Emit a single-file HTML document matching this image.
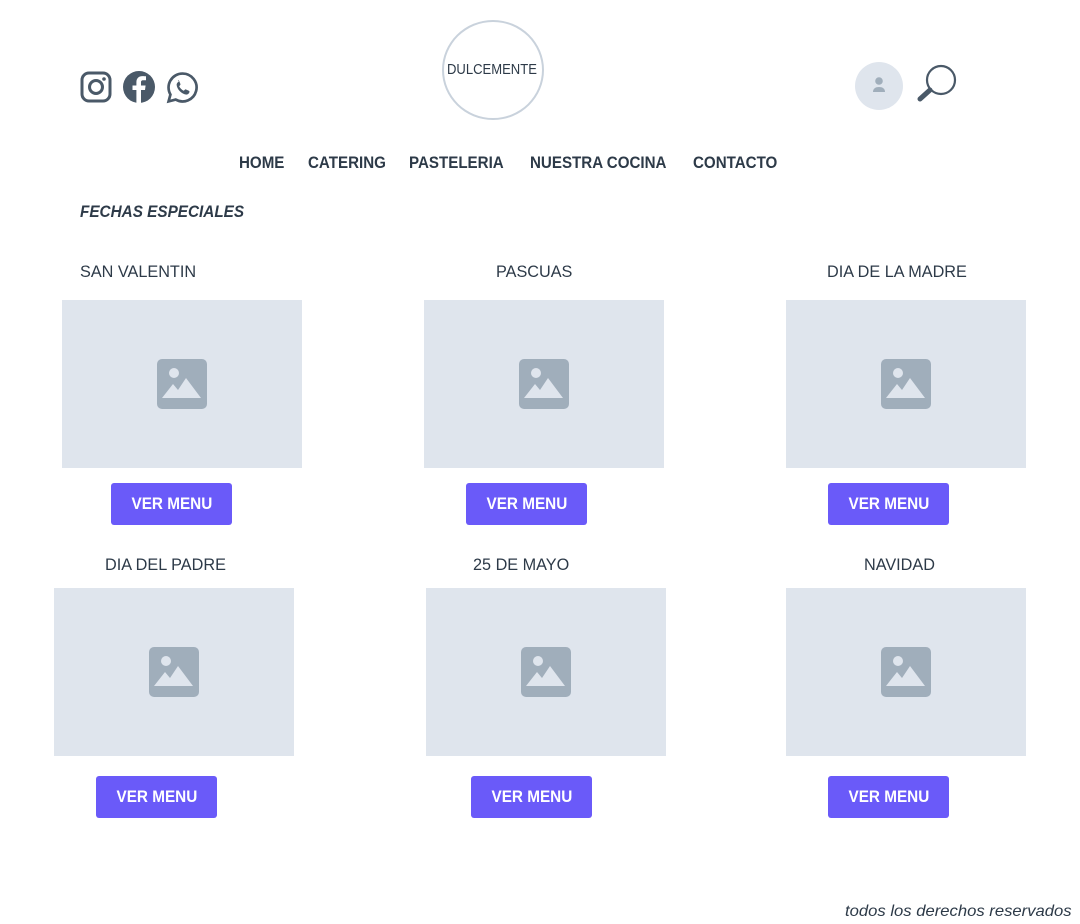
<!DOCTYPE html>
<html><head><meta charset="utf-8">
<style>
*{margin:0;padding:0;box-sizing:border-box}
body{width:1080px;height:924px;background:#fff;position:relative;overflow:hidden;font-family:"Liberation Sans",sans-serif;color:#2d3a48}
.a{position:absolute}
.t{position:absolute;white-space:nowrap;transform-origin:left center}
.nav{font-weight:bold;font-size:17px;transform:scaleX(.89);transform-origin:left center}
.lbl{font-size:17px;color:#2d3a48;transform:scaleX(.955)}
.img{position:absolute;width:240px;height:168px;background:#dfe5ed}
.img svg{position:absolute;left:95px;top:59px}
.btn{position:absolute;width:121px;height:42px;background:#6a5af9;border-radius:3px;color:#fff;font-weight:bold;font-size:17px;display:flex;align-items:center;justify-content:center}
.btn span{display:inline-block;transform:scaleX(.9)}
</style></head><body>
<svg class="a" style="left:80px;top:71px" width="32" height="32" viewBox="0 0 32 32"><rect x="2" y="2" width="28" height="28" rx="7" fill="none" stroke="#4a5968" stroke-width="3"/><circle cx="16" cy="16" r="6.5" fill="none" stroke="#4a5968" stroke-width="3"/><circle cx="24" cy="8" r="1.8" fill="#4a5968"/></svg>
<svg class="a" style="left:123px;top:71px" width="32" height="32" viewBox="0 0 32 32"><circle cx="16" cy="16" r="16" fill="#4a5968"/><path d="M18 32V19h4l.6-4.5H18v-3c0-1.3.4-2.2 2.3-2.2H23V5.3c-.5 0-2-.2-3.6-.2-3.6 0-6 2.2-6 6.2v3.2H9.5V19h3.9v13z" fill="#fff"/></svg>
<svg class="a" style="left:166px;top:71px" width="33" height="33" viewBox="0 0 32 32"><path d="M16 2.5A13.5 13.5 0 0 0 4.3 22.8L2.5 29.5l6.9-1.8A13.5 13.5 0 1 0 16 2.5z" fill="none" stroke="#4a5968" stroke-width="2.6"/><path d="M11.5 9c.5 0 1 0 1.3.8l1.2 2.8c.1.4 0 .7-.2 1l-1 1.2c.8 1.8 2.6 3.6 4.4 4.4l1.2-1.1c.3-.3.6-.3 1-.2l2.8 1.3c.6.3.6.7.5 1.3-.3 1.4-1.6 2.4-3 2.4-4.5-.4-9-4.9-9.4-9.4 0-1.5 1-2.8 2.2-3.1z" fill="#4a5968"/></svg>
<div class="a" style="left:442px;top:20px;width:102px;height:100px;border:2px solid #c9d2dc;border-radius:50%"></div>
<div class="t" style="left:447px;top:61px;font-size:15px;color:#2d3a48;transform:scaleX(.87)">DULCEMENTE</div>
<div class="a" style="left:855px;top:62px;width:48px;height:48px;border-radius:50%;background:#dfe5ed"></div>
<svg class="a" style="left:871px;top:76px" width="16" height="18" viewBox="0 0 16 18"><circle cx="8" cy="5" r="3.8" fill="#a0aebb"/><path d="M2 16c0-3.5 2.5-5 6-5s6 1.5 6 5z" fill="#a0aebb"/></svg>
<svg class="a" style="left:917px;top:63px" width="42" height="40" viewBox="0 0 42 40"><circle cx="24" cy="17" r="14" fill="none" stroke="#4a5968" stroke-width="2.2"/><path d="M13 27L3 36" stroke="#4a5968" stroke-width="5" stroke-linecap="round"/></svg>
<div class="t nav" style="left:239px;top:153px">HOME</div>
<div class="t nav" style="left:308px;top:153px">CATERING</div>
<div class="t nav" style="left:409px;top:153px">PASTELERIA</div>
<div class="t nav" style="left:530px;top:153px">NUESTRA COCINA</div>
<div class="t nav" style="left:693px;top:153px">CONTACTO</div>
<div class="t" style="left:80px;top:202px;font-weight:bold;font-style:italic;font-size:17px;transform:scaleX(.9)">FECHAS ESPECIALES</div>
<div class="t lbl" style="left:80px;top:262px">SAN VALENTIN</div>
<div class="t lbl" style="left:496px;top:262px">PASCUAS</div>
<div class="t lbl" style="left:827px;top:262px">DIA DE LA MADRE</div>
<div class="t lbl" style="left:105px;top:555px">DIA DEL PADRE</div>
<div class="t lbl" style="left:473px;top:555px">25 DE MAYO</div>
<div class="t lbl" style="left:864px;top:555px">NAVIDAD</div>
<div class="img" style="left:62px;top:300px"><svg width="50" height="50" viewBox="0 0 50 50"><rect width="50" height="50" rx="5" fill="#a0aebb"/><circle cx="17" cy="14" r="5" fill="#dfe5ed"/><path d="M5 39l11-14 5 6 8-12 15 20z" fill="#dfe5ed"/></svg></div>
<div class="img" style="left:424px;top:300px"><svg width="50" height="50" viewBox="0 0 50 50"><rect width="50" height="50" rx="5" fill="#a0aebb"/><circle cx="17" cy="14" r="5" fill="#dfe5ed"/><path d="M5 39l11-14 5 6 8-12 15 20z" fill="#dfe5ed"/></svg></div>
<div class="img" style="left:786px;top:300px"><svg width="50" height="50" viewBox="0 0 50 50"><rect width="50" height="50" rx="5" fill="#a0aebb"/><circle cx="17" cy="14" r="5" fill="#dfe5ed"/><path d="M5 39l11-14 5 6 8-12 15 20z" fill="#dfe5ed"/></svg></div>
<div class="img" style="left:54px;top:588px"><svg width="50" height="50" viewBox="0 0 50 50"><rect width="50" height="50" rx="5" fill="#a0aebb"/><circle cx="17" cy="14" r="5" fill="#dfe5ed"/><path d="M5 39l11-14 5 6 8-12 15 20z" fill="#dfe5ed"/></svg></div>
<div class="img" style="left:426px;top:588px"><svg width="50" height="50" viewBox="0 0 50 50"><rect width="50" height="50" rx="5" fill="#a0aebb"/><circle cx="17" cy="14" r="5" fill="#dfe5ed"/><path d="M5 39l11-14 5 6 8-12 15 20z" fill="#dfe5ed"/></svg></div>
<div class="img" style="left:786px;top:588px"><svg width="50" height="50" viewBox="0 0 50 50"><rect width="50" height="50" rx="5" fill="#a0aebb"/><circle cx="17" cy="14" r="5" fill="#dfe5ed"/><path d="M5 39l11-14 5 6 8-12 15 20z" fill="#dfe5ed"/></svg></div>
<div class="btn" style="left:111px;top:483px"><span>VER MENU</span></div>
<div class="btn" style="left:466px;top:483px"><span>VER MENU</span></div>
<div class="btn" style="left:828px;top:483px"><span>VER MENU</span></div>
<div class="btn" style="left:96px;top:776px"><span>VER MENU</span></div>
<div class="btn" style="left:471px;top:776px"><span>VER MENU</span></div>
<div class="btn" style="left:828px;top:776px"><span>VER MENU</span></div>
<div class="t" style="left:845px;top:903px;font-style:italic;font-size:16px;color:#2d3a48;transform:scaleX(1.04)">todos los derechos reservados</div>
</body></html>
